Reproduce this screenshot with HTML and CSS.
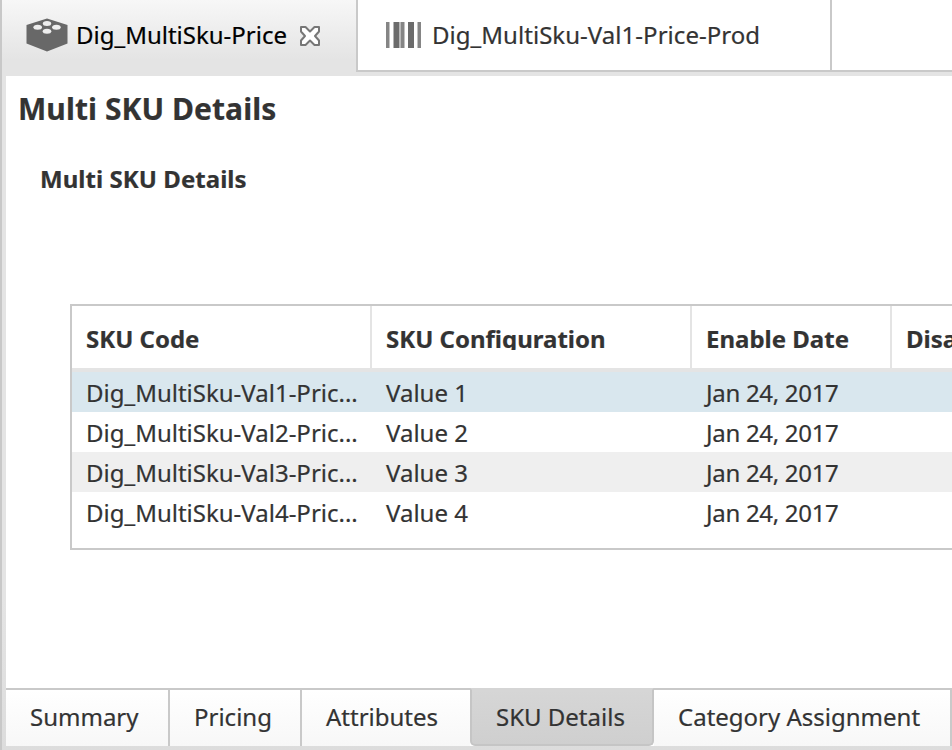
FILE: index.html
```html
<!DOCTYPE html>
<html lang="en">
<head>
<meta charset="utf-8">
<title>Multi SKU Details</title>
<link rel="stylesheet" href="styles.css">
</head>
<body>
<div class="window">
  <nav class="editor-tabs">
    <div class="editor-tab active">
      <svg class="cube" width="42" height="34" viewBox="0 0 42 34">
        <path d="M21 .5 41.500 7v18.500L21 33.500.5 25.500V7z" fill="#686868"/>
        <g fill="#eee"><ellipse cx="21" cy="5.400" rx="4.200" ry="2.500"/><ellipse cx="11.700" cy="9.200" rx="4.300" ry="2.500"/><ellipse cx="30.400" cy="9.200" rx="4.300" ry="2.500"/><ellipse cx="21" cy="13.200" rx="4.300" ry="2.500"/></g>
      </svg>
      <span class="label label-product">Dig_MultiSku-Price</span>
      <svg class="close" width="22" height="22" viewBox="0 0 22 22">
        <path d="M2 2h4.500l4.500 4.500 4.500-4.500h4.500v4.500l-4 4.500 4 4.500v4.500h-4.500L11 15.500l-4.500 4.500H2v-4.500l4-4.500-4-4.500z" fill="#fff" stroke="#777" stroke-width="2" stroke-linejoin="round"/>
      </svg>
    </div>
    <div class="editor-tab">
      <svg class="barcode" width="38" height="28" viewBox="0 0 38 28">
        <path d="M1 1h3.500v26H1zM16 1h3.500v26h-3.500zM32.500 1h3.500v26h-3.500z" fill="#858585"/>
        <path d="M8.500 1h6v26h-6zM23 1h6v26h-6z" fill="#6c6c6c"/>
        <path d="M14.500 1H16v26h-1.500z" fill="#bbb"/>
      </svg>
      <span class="label label-sku">Dig_MultiSku-Val1-Price-Prod</span>
    </div>
    <div class="tab-space"></div>
  </nav>
  <main class="content">
    <h1>Multi SKU Details</h1>
    <h2>Multi SKU Details</h2>
    <div class="table">
      <div class="row head"><div><span>SKU Code</span></div><div><span>SKU Configuration</span></div><div><span>Enable Date</span></div><div><span>Disable Date</span></div></div>
      <div class="row selected"><div>Dig_MultiSku-Val1-Pric...</div><div>Value 1</div><div class="date">Jan 24, 2017</div><div></div></div>
      <div class="row"><div>Dig_MultiSku-Val2-Pric...</div><div>Value 2</div><div class="date">Jan 24, 2017</div><div></div></div>
      <div class="row shaded"><div>Dig_MultiSku-Val3-Pric...</div><div>Value 3</div><div class="date">Jan 24, 2017</div><div></div></div>
      <div class="row"><div>Dig_MultiSku-Val4-Pric...</div><div>Value 4</div><div class="date">Jan 24, 2017</div><div></div></div>
    </div>
  </main>
  <nav class="page-tabs">
    <div class="page-tab summary">Summary</div>
    <div class="page-tab pricing">Pricing</div>
    <div class="page-tab attributes">Attributes</div>
    <div class="page-tab current">SKU Details</div>
    <div class="page-tab category">Category Assignment</div>
  </nav>
</div>
</body>
</html>
```
FILE: styles.css
```css
* { box-sizing: border-box; }
body {
  margin: 0;
  width: 952px;
  height: 750px;
  overflow: hidden;
  font: 24px/40px "Noto Sans", sans-serif;
  color: #333;
  -webkit-text-stroke-width: .2px;
}
.window {
  height: 750px;
  display: flex;
  flex-direction: column;
  border-left: 2px solid #c8c8c8;
  background: linear-gradient(#f7f7f7 0, #e4e4e4 60px, #e4e4e4 600px, #dcdcdc 750px);
}
.editor-tabs { height: 76px; padding-bottom: 4px; display: flex; flex: none; }
.editor-tab {
  width: 474px;
  padding: 0 0 0 27px;
  display: flex;
  align-items: center;
  background: #fff;
  border: solid #c9c9c9;
  border-width: 0 2px 2px 0;
}
.editor-tab.active {
  width: 356px;
  padding-left: 24px;
  padding-bottom: 2px;
  color: #000;
  background: none;
  border-width: 0 2px 0 0;
}
.tab-space { flex: 1; background: #fff; border-bottom: 2px solid #c9c9c9; }
.label { white-space: nowrap; }
.label-sku { letter-spacing: .04px; }
.cube { margin-right: 8px; }
.close { margin: 2px 0 0 12px; }
.barcode { margin-right: 9px; }
.content { height: 612px; margin-left: 4px; flex: none; background: #fff; overflow: hidden; }
h1, h2 { margin: 0; font-weight: 700; white-space: nowrap; }
h1 { padding: 13px 0 0 12px; font-size: 30px; line-height: 40px; letter-spacing: .06px; }
h2 { padding: 30px 0 0 34px; font-size: 24px; line-height: 40px; letter-spacing: .05px; }
.table { width: 1000px; height: 246px; margin: 105px 0 0 64px; border: 2px solid #c9c9c9; }
.row { display: grid; grid-template-columns: 300px 320px 200px 1fr; height: 40px; line-height: 42px; white-space: nowrap; }
.row > div { padding-left: 14px; overflow: hidden; }
.row > .date { letter-spacing: -.3px; }
.selected { background: #d9e7ee; }
.shaded { background: #efefef; }
.head { height: 66px; font-weight: 700; border-bottom: 4px solid #e4e4e4; }
.head > div { border-right: 2px solid #e4e4e4; padding-top: 17px; }
.head span { display: block; height: 27px; line-height: 32px; overflow: hidden; }
.page-tabs { height: 58px; margin-left: 4px; display: flex; flex: none; background: #fff; }
.page-tab {
  padding-left: 24px;
  line-height: 53px;
  white-space: nowrap;
  background: linear-gradient(#fff, #f7f7f7);
  border: solid #c9c9c9;
  border-width: 2px 2px 0 0;
}
.summary { width: 164px; }
.pricing { width: 132px; }
.attributes { width: 168px; border-right: 0; }
.current {
  width: 184px;
  border: 2px solid #c5c5c5;
  border-top-color: #d5d5d5;
  border-radius: 0 0 5px 5px;
  background: linear-gradient(#d6d6d6, #cfcfcf);
}
.category { width: 298px; }
```
